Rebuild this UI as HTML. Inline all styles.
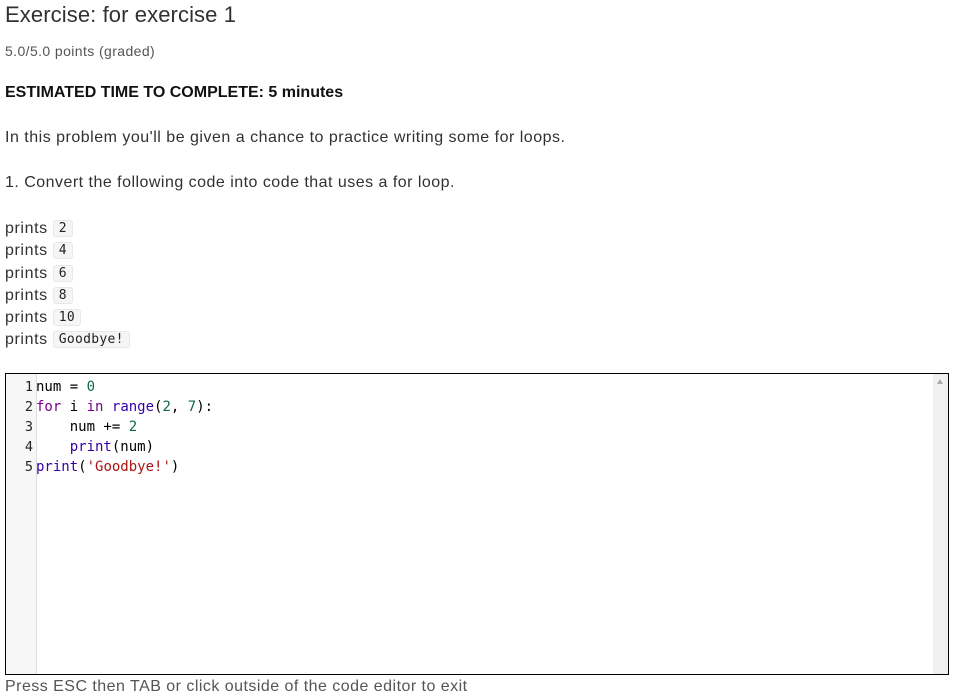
<!DOCTYPE html>
<html><head><meta charset="utf-8"><style>
body{margin:0;width:958px;height:696px;overflow:hidden;background:#fff;font-family:"Liberation Sans",sans-serif;color:#313131;position:relative}
.a{position:absolute;white-space:nowrap}
code{font-family:"DejaVu Sans Mono","Liberation Mono",monospace;font-size:13px;line-height:15px;display:inline-block;vertical-align:1px;background:#f5f5f5;border:1px solid #e8e8e8;border-radius:3px;padding:0 5px;color:#222;letter-spacing:.3px}
.ed{position:absolute;left:5px;top:373px;width:942px;height:300px;border:1px solid #000;background:#fff}
.gut{position:absolute;left:0;top:0;width:30px;height:100%;background:#f7f7f7;border-right:1px solid #ddd}
.sb{position:absolute;right:0;top:0;width:15px;height:100%;background:#f0f0f0}
.ln{position:absolute;font-family:"DejaVu Sans Mono",monospace;font-size:14px;line-height:20px;white-space:pre}
.k{color:#708}.n{color:#164}.b{color:#30a}.s{color:#a11}.p{color:#05a}
</style></head><body>
<div class="a" style="left:5px;top:2px;font-size:22px;color:#313131;letter-spacing:.1px">Exercise: for exercise 1</div>
<div class="a" style="left:5px;top:43px;font-size:14px;color:#555;letter-spacing:.4px">5.0/5.0 points (graded)</div>
<div class="a" style="left:5px;top:84px;font-size:16px;font-weight:bold;color:#111">ESTIMATED TIME TO COMPLETE: 5 minutes</div>
<div class="a" style="left:5px;top:129px;font-size:16px;letter-spacing:.5px">In this problem you'll be given a chance to practice writing some for loops.</div>
<div class="a" style="left:5px;top:174px;font-size:16px;letter-spacing:.48px">1. Convert the following code into code that uses a for loop.</div>
<div class="a" style="left:5px;top:218px;font-size:16px;line-height:22.3px;letter-spacing:.6px">prints <code>2</code><br>prints <code>4</code><br>prints <code>6</code><br>prints <code>8</code><br>prints <code>10</code><br>prints <code>Goodbye!</code></div>
<div class="ed"><div class="gut"></div><div class="sb"><div style="position:absolute;left:4px;top:5px;width:0;height:0;border-left:3.5px solid transparent;border-right:3.5px solid transparent;border-bottom:5px solid #aaa"></div></div>
<div class="ln" style="left:0;top:3px;width:27px;text-align:right;color:#222;font-size:13.5px">1
2
3
4
5</div>
<div class="ln" style="left:30px;top:3px;color:#000">num = <span class="n">0</span>
<span class="k">for</span> i <span class="k">in</span> <span class="b">range</span>(<span class="n">2</span>, <span class="n">7</span>):
    num += <span class="n">2</span>
    <span class="b">print</span>(num)
<span class="b">print</span>(<span class="s">'Goodbye!'</span>)</div>
</div>
<div class="a" style="left:5px;top:678px;font-size:16px;color:#555;letter-spacing:.47px">Press ESC then TAB or click outside of the code editor to exit</div>
</body></html>
